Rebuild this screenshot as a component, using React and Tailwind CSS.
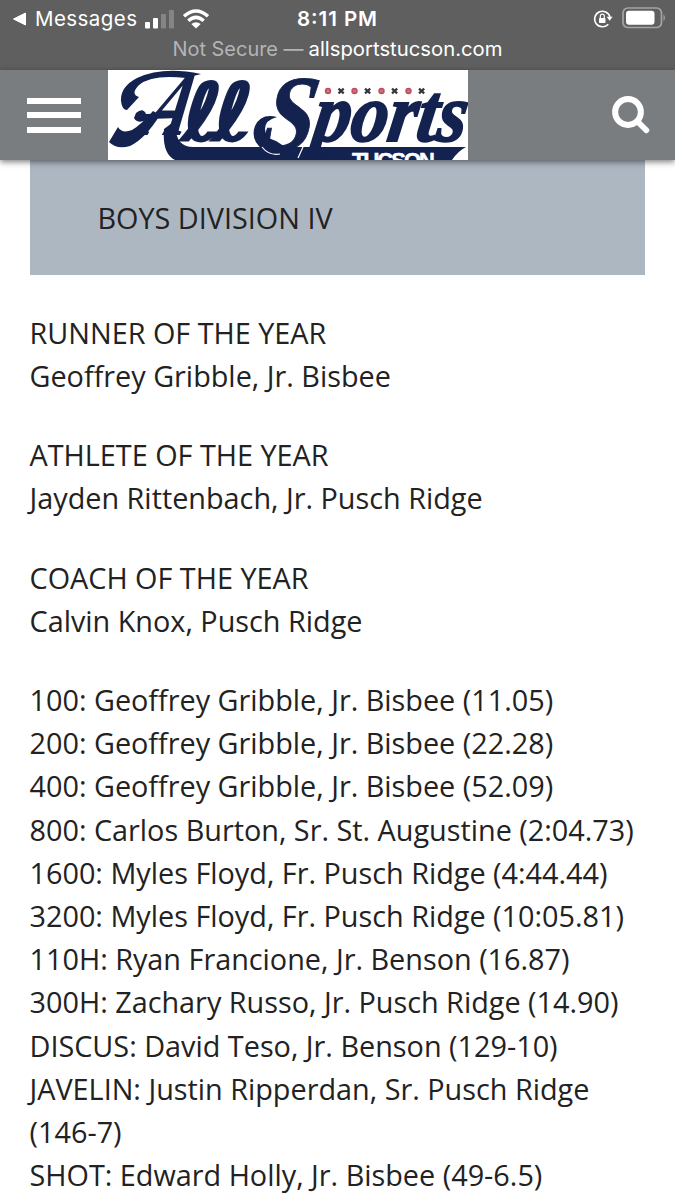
import { Fragment } from 'react'

const awards = [
  ['RUNNER OF THE YEAR', 'Geoffrey Gribble, Jr. Bisbee'],
  ['ATHLETE OF THE YEAR', 'Jayden Rittenbach, Jr. Pusch Ridge'],
  ['COACH OF THE YEAR', 'Calvin Knox, Pusch Ridge'],
  [
    '100: Geoffrey Gribble, Jr. Bisbee (11.05)',
    '200: Geoffrey Gribble, Jr. Bisbee (22.28)',
    '400: Geoffrey Gribble, Jr. Bisbee (52.09)',
    '800: Carlos Burton, Sr. St. Augustine (2:04.73)',
    '1600: Myles Floyd, Fr. Pusch Ridge (4:44.44)',
    '3200: Myles Floyd, Fr. Pusch Ridge (10:05.81)',
    '110H: Ryan Francione, Jr. Benson (16.87)',
    '300H: Zachary Russo, Jr. Pusch Ridge (14.90)',
    'DISCUS: David Teso, Jr. Benson (129-10)',
    'JAVELIN: Justin Ripperdan, Sr. Pusch Ridge (146-7)',
    'SHOT: Edward Holly, Jr. Bisbee (49-6.5)',
  ],
]

function StatusBar(){
  return (
    <div className="relative h-[70px] bg-[#5f5f5f] font-[Inter,sans-serif] text-white">
      <div className="grid h-[37px] grid-cols-3 items-center pl-3">
        <div className="flex items-center">
          <svg width="15" height="14" viewBox="0 0 15 14"><path d="M1.5 7 13.5 1v12z" fill="#fff" stroke="#fff" strokeLinejoin="round"/></svg>
          <svg className="-mr-[108px] overflow-visible" width="108" height="28"><text x="8" y="21" fontSize="20.5" textLength="102" fill="#fff">Messages</text></svg>
          <svg className="ml-[117px] shrink-0" width="31" height="20" viewBox="0 0 31 20" fill="#fff">
            <rect x="1" y="13" width="5" height="6.5" rx="1"/>
            <rect x="9" y="9" width="5" height="10.5" rx="1"/>
            <rect x="17" y="5" width="5" height="14.5" rx="1" opacity=".24"/>
            <rect x="25" y="1" width="5" height="18.5" rx="1" opacity=".24"/>
          </svg>
          <svg className="ml-[7px] shrink-0" width="28" height="20" viewBox="0 0 28 20" fill="none" stroke="#fff" strokeWidth="3.5">
            <path d="M2 7.2Q14-3.2 26 7.2M6.3 11.8Q14 5 21.7 11.8"/>
            <path d="M9.3 15Q14 11.4 18.7 15L14 19.6z" fill="#fff" stroke="none"/>
          </svg>
        </div>
        <svg className="-ml-[13px] justify-self-center" width="84" height="26"><text x="2" y="20" fontSize="20.5" fontWeight="600" textLength="80" fill="#fff">8:11 PM</text></svg>
        <div className="flex items-center justify-end gap-[9px] pr-[9px]">
          <svg width="20" height="20" viewBox="0 0 20 20" fill="none" stroke="#fff" strokeWidth="1.6">
            <path d="M15.3 15.2A7.8 7.8 0 1 1 17 8"/>
            <path d="M13.6 7.8h6l-3 4z" fill="#fff" stroke="none"/>
            <rect x="6" y="9" width="6.5" height="5" rx=".7" fill="#fff" stroke="none"/>
            <path d="M7.3 9V7.2a2 2 0 0 1 4 0V9" strokeWidth="1.2"/>
          </svg>
          <svg className="-mt-0.5" width="44" height="22" viewBox="0 0 44 22">
            <rect x="1" y="1" width="38.5" height="19.5" rx="5" fill="none" stroke="#a4a4a4" strokeWidth="1.7"/>
            <rect x="4" y="3.8" width="28.5" height="14" rx="3" fill="#fff"/>
            <path d="M41.5 7.5q3 3.2 0 6.5z" fill="#a4a4a4"/>
          </svg>
        </div>
      </div>
      <svg className="mx-auto block" width="334" height="28">
        <text x="1.5" y="18.5" fontSize="20" textLength="131" lengthAdjust="spacingAndGlyphs" fill="#b4b4b4">Not Secure —</text>
        <text x="137.5" y="18.5" fontSize="20" textLength="194" lengthAdjust="spacingAndGlyphs" fill="#fff">allsportstucson.com</text>
      </svg>
    </div>
  )
}

function Logo(){
  return (
    <svg className="ml-[27px] h-[90px] w-[360px] shrink-0 bg-white" viewBox="0 0 360 90" aria-label="All Sports Tucson">
      <g fill="#14224f" stroke="#14224f">
        {/* ribbon and flourishes round the lettering */}
        <path d="M68 50Q65 78 87 77H358Q350 81 344 90H67Q54 84 56 59Z" stroke="none"/>
        <path d="M93 4Q55-4 29 8Q12 17 13 31Q14 40 19 40L31 27Q22 24 31 15Q44 4 78 8Z" stroke="none"/>
        <path d="M1 72 10 57Q14 64 24 60Q34 54 45 41L52 45Q37 69 22 76Q9 80 1 72Z" stroke="none"/>
        <path d="M28 43Q35 37 38 44L72 43V48L40 49Q30 55 26 48Z" stroke="none"/>
        <path d="M160 83Q141 72 147 56Q153 43 169 47Q157 50 157 59Q157 68 168 71L182 80Z" stroke="none"/>
        <g fontFamily="Liberation Serif, serif" fontWeight="700" fontStyle="italic">
          <text transform="translate(30 65) skewX(-24)" fontSize="90" textLength="45" lengthAdjust="spacingAndGlyphs" strokeWidth="0">A</text>
          <g fontFamily="DejaVu Sans, sans-serif" fontWeight="400" fontStyle="normal" fontSize="79" strokeWidth="2.8">
            <text transform="translate(74 70) skewX(-2)" textLength="39" lengthAdjust="spacingAndGlyphs">ℓ</text>
            <text transform="translate(105 70) skewX(-2)" textLength="39" lengthAdjust="spacingAndGlyphs">ℓ</text>
          </g>
          <text transform="translate(151 80) skewX(-10)" fontSize="108" textLength="52" lengthAdjust="spacingAndGlyphs" strokeWidth="1">S</text>
          <text transform="translate(203 71) skewX(-9)" fontSize="83" textLength="153" lengthAdjust="spacingAndGlyphs" strokeWidth="2">ports</text>
        </g>
      </g>
      <path d="M154 77q7 9 18 7M190 88l5-11" fill="none" stroke="#fff" strokeWidth="1.2"/>
      {[220, 246.5, 273.5, 300.5].map(x => (
        <Fragment key={x}>
          <circle cx={x} cy="21" r="3.2" fill="#bd4f5b"/>
          <path d={`M${x - 1.2} 19.5q2 1.5 0 3m2.4-3q-2 1.5 0 3`} fill="none" stroke="#efd2d5" strokeWidth=".4"/>
          <path d={`M${x + 10.5} 18.6l5.2 4.8m0-4.8-5.2 4.8`} stroke="#34363f" strokeWidth="2.2"/>
        </Fragment>
      ))}
      <text x="244" y="98" fontFamily="Liberation Sans, sans-serif" fontWeight="700" fontSize="22" textLength="83" fill="#fff" stroke="#fff" strokeWidth=".5">TUCSON</text>
    </svg>
  )
}

function SiteHeader(){
  return (
    <header className="relative flex h-[90px] items-center bg-[#7a7d7f] pl-[27px] shadow-[0_2px_6px_rgba(0,0,0,.5)]">
      <div className="flex h-[35px] w-[54px] shrink-0 flex-col justify-between">
        <span className="h-1.5 bg-white"/>
        <span className="h-1.5 bg-white"/>
        <span className="h-1.5 bg-white"/>
      </div>
      <Logo/>
      <svg className="mr-[25px] ml-auto" width="38" height="38" viewBox="0 0 38 38" fill="none" stroke="#fff">
        <circle cx="16" cy="16" r="12.9" strokeWidth="6"/>
        <path d="m26 26 8.3 8.3" strokeWidth="5.8" strokeLinecap="round"/>
      </svg>
    </header>
  )
}

export default function App(){
  return (
    <div className="h-[1200px] overflow-hidden bg-white">
      <StatusBar/>
      <SiteHeader/>
      <main className="pr-[30px] pl-[29.5px] font-['Open_Sans',sans-serif] text-[28.8px] leading-[43.2px] text-[#222]">
        <div className="mb-[35.8px] flex h-[115px] items-center bg-[#adb7c2] pl-[68px]">BOYS DIVISION IV</div>
        {awards.map(lines => (
          <p key={lines[0]} className="mb-9">
            {lines.map(line => <span key={line} className="block">{line}</span>)}
          </p>
        ))}
      </main>
    </div>
  )
}
